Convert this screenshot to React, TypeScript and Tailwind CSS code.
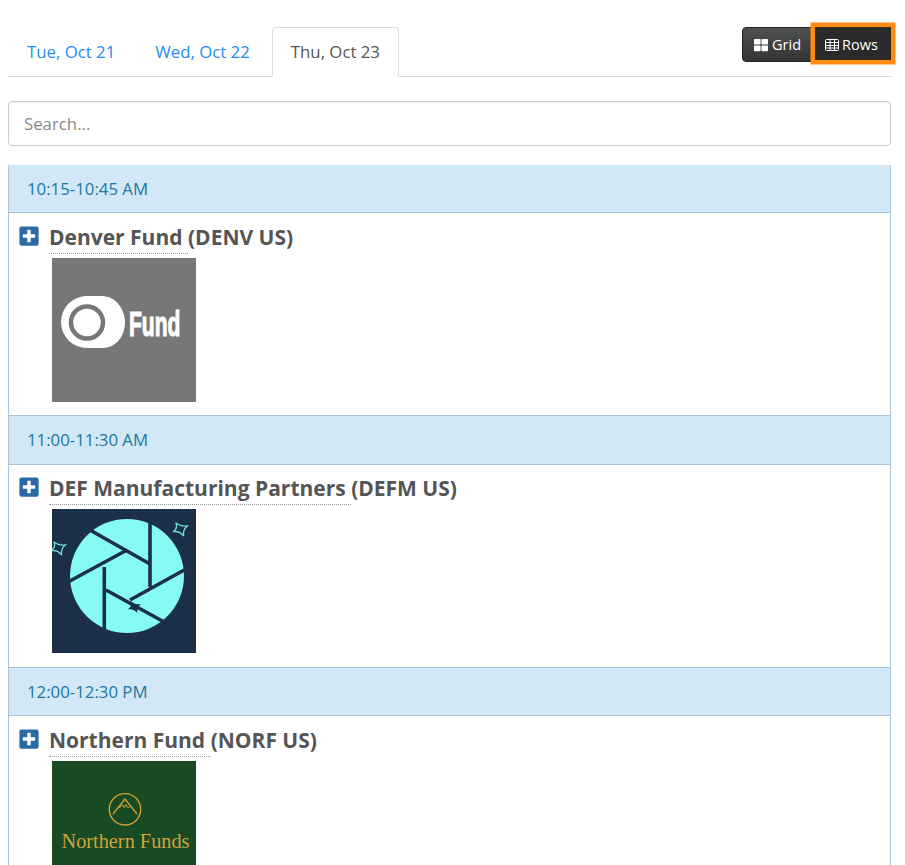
import React from "react";
import { FaPlusSquare, FaThLarge } from "react-icons/fa";

type Slot = {
    time: string;
    name: string;
    ticker: string;
    logo: React.ReactNode;
};

function RowsIcon() {
    return (
        <svg viewBox="0 0 14 12" className="h-3 w-3.5" fill="none" stroke="currentColor" strokeWidth="1">
            <rect x="0.5" y="0.5" width="13" height="11" rx="1" />
            <path d="M0.5 3.5H13.5M0.5 6.5H13.5M0.5 9H13.5M5 0.5V11.5M9.5 0.5V11.5" />
        </svg>
    );
}

function FundLogo() {
    return (
        <svg viewBox="0 0 144 144" className="block h-36 w-36">
            <rect width="144" height="144" fill="#777777" />
            <path d="M35 38 H50 C64 38 73 52 73 64 C73 78 64 90 50 90 H35 A26 26 0 0 1 35 38Z" fill="#ffffff" />
            <circle cx="35" cy="64.5" r="16" fill="none" stroke="#777777" strokeWidth="4.5" />
            <text
                transform="translate(77 78) scale(0.6 1)"
                fontFamily="'Liberation Sans', sans-serif"
                fontWeight="700"
                fontSize="35"
                fill="#ffffff"
                stroke="#ffffff"
                strokeWidth="1.2"
            >
                Fund
            </text>
        </svg>
    );
}

function ShutterLogo() {
    const star = "M-5.3 -6.3 Q-0.5 -2.5 6.3 -3 Q1.5 1 2.7 7 Q-1.5 1.5 -8 2.7 Q-2.5 -1 -5.3 -6.3Z";
    return (
        <svg viewBox="0 0 144 144" className="block h-36 w-36">
            <rect width="144" height="144" fill="#1b2f46" />
            <circle cx="75" cy="67" r="57" fill="#86fbf3" />
            <g stroke="#1b2f46" strokeWidth="3.6" fill="none">
                <path d="M37 20.5 L98 55" />
                <path d="M98 8 L98 78" />
                <path d="M134 60 L78 91" />
                <path d="M54 81 L113 113.5" />
                <path d="M52.3 58 L52.3 124" />
                <path d="M16 73 L75 41" />
            </g>
            <path d={star} transform="translate(83 98) scale(0.9)" fill="#1b2f46" />
            <g fill="none" stroke="#6fdcd8" strokeWidth="1.3">
                <path d={star} transform="translate(129 20)" />
                <path d={star} transform="translate(7 39)" />
            </g>
        </svg>
    );
}

function NorthernLogo() {
    return (
        <svg viewBox="0 0 144 144" className="block h-36 w-36">
            <rect width="144" height="144" fill="#184a23" />
            <g fill="none" stroke="#d1a032" strokeWidth="1.4">
                <circle cx="73" cy="48.3" r="15.7" />
                <path d="M61 53 L73 38 L85 53" />
                <path d="M67 47 L70.5 44 L72 46.5 L74 43.5 L76 47 L78 45.5" strokeWidth="1" />
            </g>
            <text
                x="9.5"
                y="87"
                fontFamily="'Liberation Serif', serif"
                fontSize="20"
                fill="#cfa23c"
                textLength="128"
                lengthAdjust="spacingAndGlyphs"
            >
                Northern Funds
            </text>
        </svg>
    );
}

const slots: Slot[] = [
    { time: "10:15-10:45 AM", name: "Denver Fund", ticker: "(DENV US)", logo: <FundLogo /> },
    { time: "11:00-11:30 AM", name: "DEF Manufacturing Partners", ticker: "(DEFM US)", logo: <ShutterLogo /> },
    { time: "12:00-12:30 PM", name: "Northern Fund", ticker: "(NORF US)", logo: <NorthernLogo /> },
];

export default function App() {
    return (
        <div className="h-[865px] overflow-hidden bg-white pr-[14px] pl-2 font-['Open_Sans',sans-serif] text-[#555555]">
            {/* Tabs + view toggle */}
            <div className="flex h-[77px] items-start justify-between border-b border-[#dddddd]">
                <div className="flex pt-[27px] text-[16.8px]">
                    <a className="flex h-[50px] items-center px-[19px] text-[#1e8cf0]">Tue, Oct 21</a>
                    <a className="ml-[2px] flex h-[50px] items-center px-[19px] text-[#1e8cf0]">Wed, Oct 22</a>
                    <a className="ml-[3px] flex h-[50px] items-center rounded-t border border-[#dddddd] border-b-white bg-white px-[18px]">
                        Thu, Oct 23
                    </a>
                </div>
                <div className="mt-[27px] flex text-[14.5px] text-white">
                    <button className="flex h-[35px] w-[73px] items-center gap-1 rounded-l border border-[#222222] bg-gradient-to-b from-[#4d5150] to-[#333333] pl-[11px]">
                        <FaThLarge className="h-3.5 w-3.5" />
                        Grid
                    </button>
                    <button className="relative flex h-[33px] w-[76px] items-center gap-[3px] border border-[#3a2a18] bg-[#2a2a2a] pt-[2px] pl-[9px] shadow-[0_0_0_4.5px_#ff8c10]">
                        <RowsIcon />
                        Rows
                    </button>
                </div>
            </div>

            {/* Search */}
            <input
                placeholder="Search..."
                className="mt-6 block h-[45px] w-full rounded border border-[#cccccc] px-[15px] text-[16.8px] text-[#555555] shadow-[inset_0_1px_1px_rgba(0,0,0,0.075)] outline-none placeholder:text-[#888888]"
            />

            {/* Schedule */}
            <div className="mt-[18.5px] border-x border-[#a9c6de]">
                {slots.map((slot) => (
                    <div key={slot.time}>
                        <div className="flex h-[48.5px] items-center border-b border-[#a9c6de] bg-[#d2e8f6] pl-[18px] text-[16.8px] text-[#20779f]">
                            {slot.time}
                        </div>
                        <div className="h-[203px] border-b border-[#a9c6de] pt-[9.9px] pl-[10px]">
                            <div className="flex items-start gap-[10px]">
                                <FaPlusSquare className="mt-[2px] h-[22px] w-[20px] text-[#2a6aa5]" />
                                <div className="text-[21px] leading-[28px] font-bold">
                                    <span className="border-b border-dotted border-[#999999] pb-[2px]">{slot.name} </span>
                                    {slot.ticker}
                                </div>
                            </div>
                            <div className="mt-[7px] ml-[33px]">{slot.logo}</div>
                        </div>
                    </div>
                ))}
            </div>
        </div>
    );
}
